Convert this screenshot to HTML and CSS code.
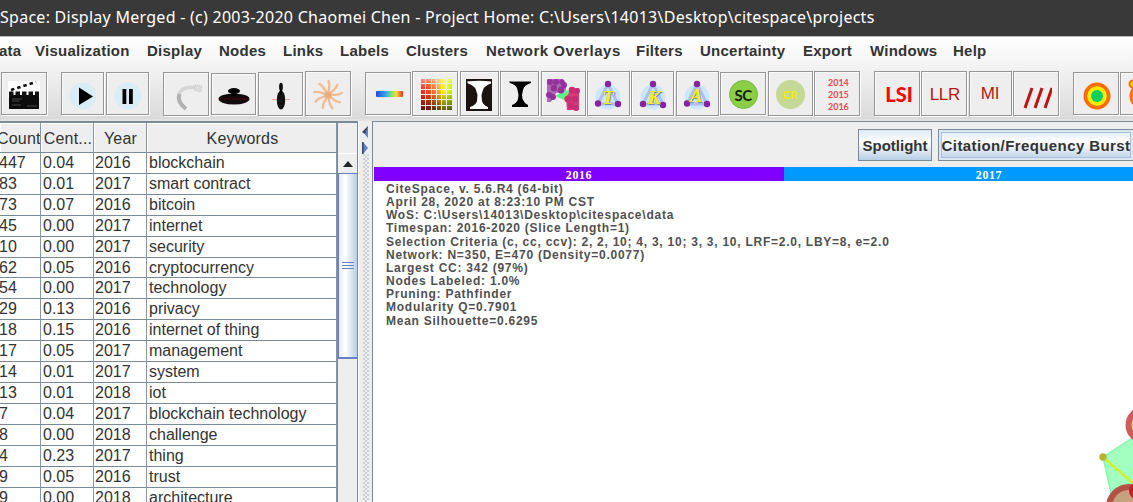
FILE: index.html
```html
<!DOCTYPE html>
<html lang="en">
<head>
<meta charset="utf-8">
<title>CiteSpace: Display Merged</title>
<link rel="stylesheet" href="styles.css">
</head>
<body>
<div class="window">
<header class="titlebar"><span class="title">Space: Display Merged - (c) 2003-2020 Chaomei Chen - Project Home: C:\Users\14013\Desktop\citespace\projects</span></header>
<div class="chrome">
<nav class="menubar">
<span class="m-data">ata</span><span class="m-vis">Visualization</span><span class="m-disp">Display</span><span class="m-nodes">Nodes</span><span class="m-links">Links</span><span class="m-labels">Labels</span><span class="m-clusters">Clusters</span><span class="m-over">Network Overlays</span><span class="m-filters">Filters</span><span class="m-unc">Uncertainty</span><span class="m-export">Export</span><span class="m-win">Windows</span><span>Help</span>
</nav>
<div class="toolbar">
<div class="group g1">
<button class="tool w46 low"><svg width="32" height="32" viewBox="0 0 32 32"><path fill="#fff" d="M0 2h32v16H0z"/><path fill="#0c0c0c" d="M1 16h30v14H1z"/><path stroke="#111" stroke-width="2.500" stroke-dasharray="3.500 3" d="M3 11L28 3"/><path stroke="#111" stroke-width="4" stroke-dasharray="4.500 2" d="M1 14.500h30"/><path stroke="#777" stroke-width=".8" d="M4 20h10M4 22h7M4 26h9M19 27h10" opacity=".7"/></svg></button>
</div>
<div class="group g2">
<button class="tool w43 low"><svg width="32" height="32" viewBox="0 0 32 32"><circle cx="16" cy="17" r="13.500" fill="#d8edf5"/><path d="M12 8.500l14 9-14 8.500z"/></svg></button>
<button class="tool w43 low"><svg width="32" height="32" viewBox="0 0 32 32"><circle cx="16" cy="17" r="13.500" fill="#d8edf5"/><path d="M10.500 10h3.800v15h-3.800zM17 10h3.800v15H17z"/></svg></button>
</div>
<div class="group g3">
<button class="tool w46"><svg width="32" height="32" viewBox="0 0 32 32" fill="none"><path stroke="#d6d6d6" stroke-width="3.500" d="M9 16C11 8 18 7 28 9"/><path stroke="#b0b0b0" stroke-width="4" d="M9.500 15C7 21 11 26 16 30"/><path fill="#ddd" stroke="#c4c4c4" stroke-dasharray="1 1" d="M25 6l7 1-1 6-7-2z"/></svg></button>
<button class="tool w45 short"><svg width="32" height="32" viewBox="0 0 32 32"><ellipse cx="16" cy="20" rx="15.500" ry="5.500" fill="#0d0d0d"/><ellipse cx="16" cy="12" rx="6" ry="3"/><path d="M13.500 11h5v6h-5z"/><path stroke="#900" stroke-dasharray="1 1" stroke-width=".7" d="M2 20h28"/></svg></button>
<button class="tool w45"><svg width="32" height="32" viewBox="0 0 32 32"><path stroke="#ecaaaa" d="M7 20.500h18"/><ellipse cx="16" cy="21" rx="4.200" ry="9.500" fill="#111"/><ellipse cx="16" cy="8" rx="1.900" ry="4.200" fill="#111"/><path d="M15 10h2v6h-2z"/></svg></button>
<button class="tool w46 tall"><svg width="32" height="32" viewBox="0 0 32 32"><g fill="none" stroke="#efbd94" stroke-width="2.300" stroke-linecap="round"><path id="arm" d="M16 16c0-5 3-8 .500-14"/><use href="#arm" transform="rotate(40 16 16)"/><use href="#arm" transform="rotate(80 16 16)"/><use href="#arm" transform="rotate(120 16 16)"/><use href="#arm" transform="rotate(160 16 16)"/><use href="#arm" transform="rotate(200 16 16)"/><use href="#arm" transform="rotate(240 16 16)"/><use href="#arm" transform="rotate(280 16 16)"/><use href="#arm" transform="rotate(320 16 16)"/></g><circle cx="16" cy="16" r="3.500" fill="#e8ad7e"/></svg></button>
</div>
<div class="group g4">
<button class="tool w46 low"><span class="spectrum"></span></button>
<button class="tool w46 tall"><span class="swatches"></span></button>
<button class="tool w39 tall"><svg width="26" height="32" viewBox="0 0 26 32"><path fill="#1b1310" d="M0 0h26v32H0z"/><path fill="#fff" d="M1 2.500Q13 1 25 2.500V4.500Q18 7 17 11L15.500 16L16 22Q17 26 22 28V30H4V28Q10 26 11 22L11.500 16L10 11Q9 7 2 4.500z"/></svg></button>
<button class="tool w39 tall"><svg width="26" height="32" viewBox="0 0 26 32"><path d="M2 2.500H24V4Q17 6 16 11L15 16L15.500 20Q17 24 21 26V28H5V26Q10 24 11 20L11.500 16L10.500 11Q10 6 3 4z"/></svg></button>
<button class="tool w45 tall"><svg width="34" height="34" viewBox="0 0 34 34"><path fill="#963ca0" opacity=".75" d="M1 1h15l4 5v8l-10 1-5 9H1z"/><path fill="#63ef86" d="M9 18l7-4 14 1v5l-12 2z"/><path stroke="#63ef86" stroke-width="2" d="M11 10l20 7"/><path fill="#dc3b78" d="M20 20l5-9 8-1v22H21z"/><g fill="#95309c"><circle cx="4" cy="4" r="3"/><circle cx="10" cy="4" r="3"/><circle cx="16" cy="4" r="2.700"/><circle cx="18" cy="7" r="3"/><circle cx="8" cy="10" r="3.300"/><circle cx="15" cy="12" r="3.400"/><circle cx="3" cy="17" r="3"/><circle cx="7" cy="19" r="3"/></g><g fill="#c62f72"><circle cx="26" cy="12" r="3.300"/><circle cx="31" cy="13" r="3"/><circle cx="22" cy="21" r="3.600"/><circle cx="29" cy="21" r="3.500"/><circle cx="25" cy="28" r="3.300"/><circle cx="30" cy="30" r="3"/></g></svg></button>
<button class="tool w43 tall"><svg width="32" height="32" viewBox="0 0 32 32"><circle cx="16" cy="18" r="12.500" fill="#cce6fb"/><path fill="none" stroke="#aebff0" stroke-width="3" d="M16 5L6 25H26z"/><g fill="#86249f"><circle cx="16" cy="5" r="3.200"/><circle cx="6" cy="24.500" r="3.200"/><circle cx="26" cy="25" r="3.200"/></g><text class="letter-shade" x="17" y="26">T</text><text class="letter" x="16" y="25">T</text></svg></button>
<button class="tool w43 tall"><svg width="32" height="32" viewBox="0 0 32 32"><circle cx="16" cy="18" r="12.500" fill="#cce6fb"/><path fill="none" stroke="#aebff0" stroke-width="3" d="M16 5L6 25H26z"/><g fill="#86249f"><circle cx="16" cy="5" r="3.200"/><circle cx="6" cy="25" r="3.200"/><circle cx="26" cy="26" r="3.200"/></g><text class="letter-shade" x="18" y="26">K</text><text class="letter" x="17" y="25">K</text></svg></button>
<button class="tool w43 tall"><svg width="32" height="32" viewBox="0 0 32 32"><circle cx="16" cy="18" r="12.500" fill="#cce6fb"/><path fill="none" stroke="#aebff0" stroke-width="3" d="M16 5L6 25H26z"/><g fill="#86249f"><circle cx="16" cy="5" r="3.200"/><circle cx="6" cy="24.500" r="3.200"/><circle cx="26" cy="25" r="3.200"/></g><text class="letter-shade" x="16" y="24">A</text><text class="letter" x="15" y="23">A</text></svg></button>
<button class="tool w46 low"><span class="disc sc">SC</span></button>
<button class="tool w45 tall"><span class="disc cr">CR</span></button>
<button class="tool w46 tall"><span class="years">2014<br>2015<br>2016</span></button>
</div>
<div class="group g5">
<button class="tool w46 tall"><span class="lsi">LSI</span></button>
<button class="tool w46 tall"><span class="llr">LLR</span></button>
<button class="tool w43 tall"><span class="mi">MI</span></button>
<button class="tool w46 tall"><svg width="32" height="32" viewBox="0 0 32 32"><path fill="none" stroke="#c51111" stroke-width="3" d="M5 29l7-20M15 29l7-20M25 29l7-20"/></svg></button>
</div>
<div class="group g6">
<button class="tool w46 low"><svg width="32" height="32" viewBox="0 0 32 32"><circle cx="17" cy="17" r="13.500" fill="#ff6c0a"/><circle cx="17" cy="17" r="9.800" fill="#ffed00"/><circle cx="17" cy="17" r="6" fill="#08d063"/></svg></button>
<button class="tool w46 low"><svg width="32" height="32" viewBox="0 0 32 32"><circle cx="16" cy="17" r="12" fill="#ffda00" stroke="#ff6c0a" stroke-width="3"/><circle cx="6" cy="5" r="3.500" fill="#ffda00" stroke="#ff6c0a" stroke-width="2"/></svg></button>
</div>
</div>
</div>
<main class="split">
<section class="left">
<div class="table">
<div class="row head"><span>Count</span><span>Cent...</span><span>Year</span><span>Keywords</span></div>
<div class="row"><span>447</span><span>0.04</span><span>2016</span><span>blockchain</span></div>
<div class="row"><span>83</span><span>0.01</span><span>2017</span><span>smart contract</span></div>
<div class="row"><span>73</span><span>0.07</span><span>2016</span><span>bitcoin</span></div>
<div class="row"><span>45</span><span>0.00</span><span>2017</span><span>internet</span></div>
<div class="row"><span>10</span><span>0.00</span><span>2017</span><span>security</span></div>
<div class="row"><span>62</span><span>0.05</span><span>2016</span><span>cryptocurrency</span></div>
<div class="row"><span>54</span><span>0.00</span><span>2017</span><span>technology</span></div>
<div class="row"><span>29</span><span>0.13</span><span>2016</span><span>privacy</span></div>
<div class="row"><span>18</span><span>0.15</span><span>2016</span><span>internet of thing</span></div>
<div class="row"><span>17</span><span>0.05</span><span>2017</span><span>management</span></div>
<div class="row"><span>14</span><span>0.01</span><span>2017</span><span>system</span></div>
<div class="row"><span>13</span><span>0.01</span><span>2018</span><span>iot</span></div>
<div class="row"><span>7</span><span>0.04</span><span>2017</span><span>blockchain technology</span></div>
<div class="row"><span>8</span><span>0.00</span><span>2018</span><span>challenge</span></div>
<div class="row"><span>4</span><span>0.23</span><span>2017</span><span>thing</span></div>
<div class="row"><span>9</span><span>0.05</span><span>2016</span><span>trust</span></div>
<div class="row"><span>9</span><span>0.00</span><span>2018</span><span>architecture</span></div>
</div>
<div class="scroll">
<div class="corner"></div>
<div class="up"><svg width="10" height="6" viewBox="0 0 10 6"><path fill="#222" d="M5 0l5 6H0z"/></svg></div>
<div class="thumb"><i></i><i></i><i></i></div>
</div>
</section>
<div class="divider"><svg width="7" height="28" viewBox="0 0 7 28"><path fill="#5f82c8" d="M6 0v12L1 6z"/><path fill="#39485e" d="M6 0L0 6l3 2z"/><path fill="#5f82c8" d="M1 16v12l5-6z"/><path fill="#39485e" d="M0 16h1.500v12H0z"/></svg><div class="dots"></div></div>
<section class="right">
<div class="actions"><button class="action spot">Spotlight</button><button class="action burst">Citation/Frequency Burst</button></div>
<div class="timeline"><span class="y2016">2016</span><span class="y2017">2017</span></div>
<div class="canvas">
<div class="info">
<p>CiteSpace, v. 5.6.R4 (64-bit)</p>
<p>April 28, 2020 at 8:23:10 PM CST</p>
<p>WoS: C:\Users\14013\Desktop\citespace\data</p>
<p>Timespan: 2016-2020 (Slice Length=1)</p>
<p>Selection Criteria (c, cc, ccv): 2, 2, 10; 4, 3, 10; 3, 3, 10, LRF=2.0, LBY=8, e=2.0</p>
<p>Network: N=350, E=470 (Density=0.0077)</p>
<p>Largest CC: 342 (97%)</p>
<p>Nodes Labeled: 1.0%</p>
<p>Pruning: Pathfinder</p>
<p>Modularity Q=0.7901</p>
<p>Mean Silhouette=0.6295</p>
</div>
<svg class="graph" width="53" height="112" viewBox="0 0 53 112"><path fill="#a3ffc0" stroke="#87f9ab" stroke-width="1.500" d="M54 47L23 67L33 112H54z"/><circle cx="64" cy="35" r="15.500" fill="#d8d06a" stroke="#cf5b5b" stroke-width="6"/><circle cx="49" cy="117" r="20" fill="#c8a080" stroke="#b35347" stroke-width="6"/><circle cx="57" cy="101" r="8" fill="#c32222"/><path stroke="#d9ee00" stroke-width="2" d="M24 68L53 93"/><circle cx="23" cy="67" r="3.700" fill="#b4b530"/></svg>
</div>
</section>
</main>
</div>
</body>
</html>
```

FILE: styles.css
```css
* { box-sizing: border-box; }
body { margin: 0; overflow: hidden; font-family: "Liberation Sans", Arial, sans-serif; color: #333; }
button { font: inherit; color: inherit; padding: 0; margin: 0; }
.window { width: 1133px; height: 502px; display: flex; flex-direction: column; overflow: hidden; background: #eee; }
.titlebar { height: 36px; flex: none; background: #393939; color: #fff; font: 16px/34px "Noto Sans", sans-serif; white-space: nowrap; }
.title { letter-spacing: .265px; }
.chrome { height: 85px; flex: none; border-top: 1px solid #bbb; border-bottom: 2px solid #e2e2e2; background: linear-gradient(#fff 0, #f5f5f5 25px, #dadada 82px); }
.menubar { height: 29px; display: flex; font-weight: bold; font-size: 15px; line-height: 28px; white-space: nowrap; letter-spacing: .25px; }
.menubar span { flex: none; }
.m-data { width: 36px; margin-left: -1px; }
.m-vis { width: 112px; }
.m-disp { width: 72px; }
.m-nodes { width: 64px; }
.m-links { width: 57px; }
.m-labels { width: 66px; }
.m-clusters { width: 80px; }
.m-over { width: 150px; letter-spacing: .5px; }
.m-filters { width: 64px; }
.m-unc { width: 103px; }
.m-export { width: 67px; }
.m-win { width: 83px; }
.toolbar { display: flex; gap: 14px; height: 53px; padding: 5px 0 0 1px; align-items: flex-start; }
.group { display: flex; flex: none; justify-content: space-between; align-items: flex-start; }
.g1 { width: 46px; }
.g2 { width: 88px; }
.g3 { width: 188px; }
.g4 { width: 495px; }
.g5 { width: 185px; }
.g6 { width: 93px; }
.tool { flex: none; height: 44px; margin-top: 1px; display: flex; align-items: center; justify-content: center; background: #eee; border: 1px solid #969696; box-shadow: 1px 1px 0 #fff, inset 1px 1px 0 #fafafa; }
.low { height: 43px; }
.short { height: 42px; margin-top: 2px; }
.tall { height: 45px; margin-top: 0; }
.w46 { width: 46px; }
.w45 { width: 45px; }
.w43 { width: 43px; }
.w39 { width: 39px; }
.tool svg { position: relative; top: 1px; }
.spectrum { width: 27px; height: 6px; margin: 1px 0 0 2px; border-radius: 1px; background: linear-gradient(90deg, #2e46d8, #2fa5ee 35%, #76dc86 55%, #f4dc3a 75%, #db3822); }
.swatches { width: 32px; height: 32px; margin: 2px 0 0 3px; background:
 repeating-linear-gradient(90deg, transparent 0 4.300px, #eee 4.300px 5.300px),
 repeating-linear-gradient(transparent 0 4.300px, #eee 4.300px 5.300px),
 linear-gradient(rgba(255,255,255,.45) 0, rgba(255,255,255,0) 32%, rgba(0,0,0,0) 38%, rgba(0,0,0,.65)),
 linear-gradient(90deg, #ff2525, #ff4a18 28%, #ff9a20 50%, #ffff00 75%, #b2ef00); }
.letter, .letter-shade { font: italic bold 19px "Liberation Serif", serif; text-anchor: middle; fill: #fff000; }
.letter-shade { fill: #7286b8; }
.disc { width: 29px; height: 29px; border-radius: 50%; text-align: center; font: bold 15px/28px Lato, sans-serif; margin-top: 1px; }
.sc { background: #8bcf48; border: 1px solid #75b83b; color: #15210b; letter-spacing: -.5px; }
.cr { background: #c6d896; color: #eded00; font-size: 11px; font-weight: 900; line-height: 30px; }
.years { color: #e74a50; font: bold 9px/12px Lato, sans-serif; text-align: center; padding: 2px 0 0 3px; }
.lsi { color: #f40808; font: 900 20px Lato, sans-serif; padding: 1px 0 0 4px; }
.llr { color: #b71616; font-size: 17px; padding: 3px 0 0 1px; letter-spacing: -.3px; }
.mi { color: #b71616; font-size: 17px; padding-top: 1px; }
.split { flex: 1; display: flex; min-height: 0; overflow: hidden; }
.left { width: 358px; flex: none; display: flex; border-top: 2px solid #7a8a99; border-right: 1px solid #7a8a99; }
.table { width: 337px; flex: none; font-size: 16px; background: #fff; white-space: nowrap; }
.row { display: grid; grid-template-columns: 41px 53px 53px 190px; height: 20.920px; line-height: 19px; }
.row span { border-right: 1px solid #8797a6; border-bottom: 1px solid #7a8a99; padding-left: 2px; overflow: hidden; }
.row span:first-child { padding: 0; text-indent: -1px; }
.row span:nth-child(3) { padding-left: 1px; }
.head { height: 30px; line-height: 31px; background: #eee; }
.head span { text-align: center; box-shadow: inset 1px 1px 0 #fff; letter-spacing: .2px; }
.row.head span:first-child { text-indent: -3px; }
.scroll { width: 20px; display: flex; flex-direction: column; background: #eee; border-left: 1px solid #7a8a99; }
.corner { height: 30px; flex: none; }
.up { height: 20px; flex: none; display: flex; align-items: center; justify-content: center; border-top: 1px solid #fff; background: #eee; }
.thumb { height: 186px; display: flex; flex-direction: column; align-items: center; justify-content: center; gap: 2px; border: 1px solid #6382bf; border-bottom-width: 2px; border-right: 0; background: linear-gradient(90deg, #e4eef7, #fff 35%, #b8cfe5); }
.thumb i { width: 12px; height: 1px; background: #6382bf; }
.divider { width: 15px; flex: none; padding: 5px 0 0 3px; border-right: 1px solid #7a8a99; border-left: 1px solid #fff; background: #eee; }
.divider svg { display: block; }
.dots { height: 370px; width: 6px; margin-left: 1px; opacity: .7; background-image: radial-gradient(circle at 1px 1px, #8d99a5 .5px, transparent .9px), radial-gradient(circle at 3px 3px, #8d99a5 .5px, transparent .9px); background-size: 4px 4px; }
.right { flex: 1; min-width: 0; display: flex; flex-direction: column; border-top: 1px solid #7a8a99; }
.actions { height: 45px; flex: none; display: flex; justify-content: flex-end; gap: 6px; padding-top: 7px; margin-right: -1px; }
.action { height: 32px; border: 1px solid #7a8a99; background: linear-gradient(#dde8f3, #fff 40%, #b8cfe5); font-weight: bold; font-size: 15px; line-height: 29px; white-space: nowrap; }
.spot { width: 74px; }
.burst { width: 196px; letter-spacing: .4px; box-shadow: inset 0 0 0 2px #dce7f2, inset 0 0 0 3px #a9bfdb; }
.timeline { height: 14px; flex: none; display: flex; margin-left: 1px; color: #fff; font: bold 12px/17px "Liberation Serif", serif; text-align: center; }
.timeline span { width: 410px; flex: none; letter-spacing: .6px; }
.y2016 { background: #8000ff; }
.y2017 { background: #0099ff; }
.canvas { flex: 1; background: #fff; position: relative; }
.info { padding: 2px 0 0 13px; font-weight: bold; font-size: 12px; line-height: 13.150px; letter-spacing: .75px; color: #505050; white-space: nowrap; }
.info p { margin: 0; }
.graph { position: absolute; right: 0; bottom: 0; }
```
